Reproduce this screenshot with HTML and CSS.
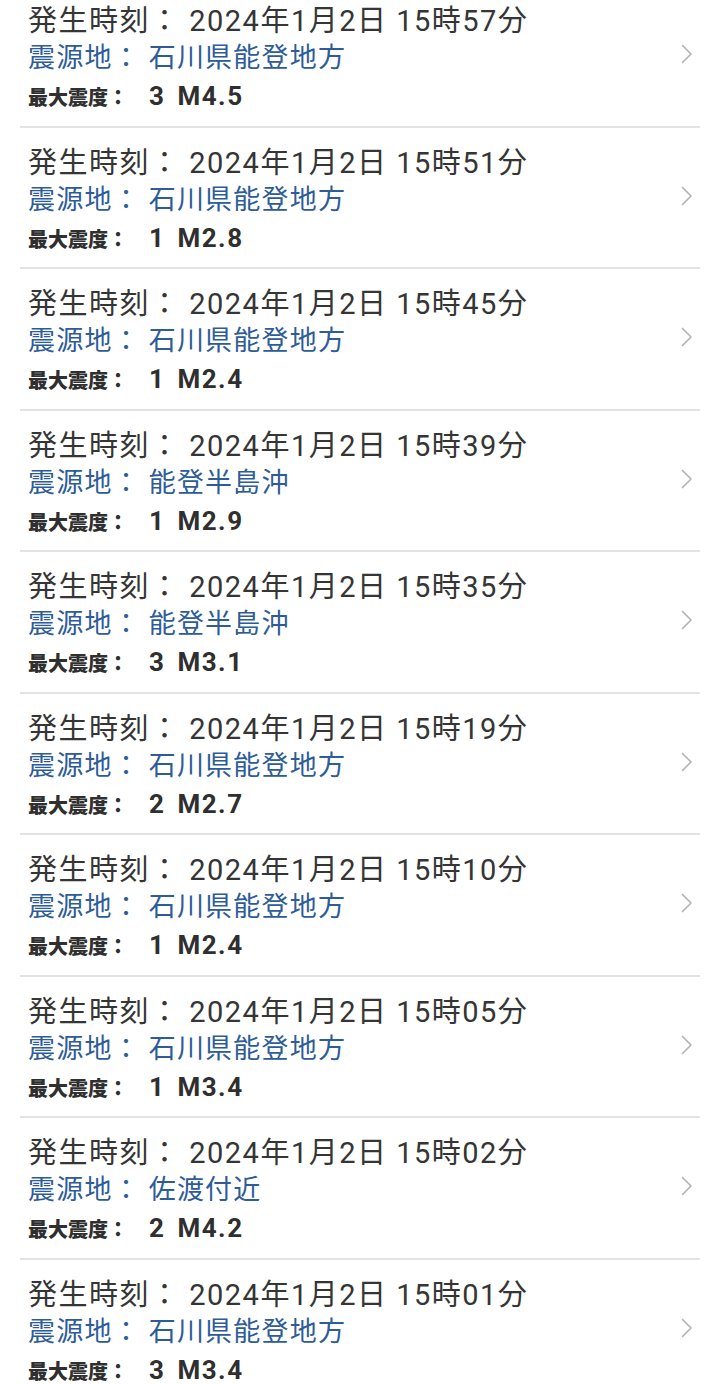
FILE: index.html
```html
<!DOCTYPE html>
<html lang="ja">
<head>
<meta charset="utf-8">
<title>地震情報</title>
<link rel="stylesheet" href="styles.css">
</head>
<body>
<ul class="list">
  <li class="item"><div class="body"><div class="t">発生時刻： 2024年1月2日 15時57分</div><div class="p">震源地： 石川県能登地方</div><div class="m"><span class="lbl">最大震度：</span><span class="v">3</span><span class="v mag">M4.5</span></div></div><svg class="chev" viewBox="0 0 12 20" width="12" height="20"><polyline points="1.5,1.5 10,10 1.5,18.5"/></svg></li>
  <li class="item"><div class="body"><div class="t">発生時刻： 2024年1月2日 15時51分</div><div class="p">震源地： 石川県能登地方</div><div class="m"><span class="lbl">最大震度：</span><span class="v">1</span><span class="v mag">M2.8</span></div></div><svg class="chev" viewBox="0 0 12 20" width="12" height="20"><polyline points="1.5,1.5 10,10 1.5,18.5"/></svg></li>
  <li class="item"><div class="body"><div class="t">発生時刻： 2024年1月2日 15時45分</div><div class="p">震源地： 石川県能登地方</div><div class="m"><span class="lbl">最大震度：</span><span class="v">1</span><span class="v mag">M2.4</span></div></div><svg class="chev" viewBox="0 0 12 20" width="12" height="20"><polyline points="1.5,1.5 10,10 1.5,18.5"/></svg></li>
  <li class="item"><div class="body"><div class="t">発生時刻： 2024年1月2日 15時39分</div><div class="p">震源地： 能登半島沖</div><div class="m"><span class="lbl">最大震度：</span><span class="v">1</span><span class="v mag">M2.9</span></div></div><svg class="chev" viewBox="0 0 12 20" width="12" height="20"><polyline points="1.5,1.5 10,10 1.5,18.5"/></svg></li>
  <li class="item"><div class="body"><div class="t">発生時刻： 2024年1月2日 15時35分</div><div class="p">震源地： 能登半島沖</div><div class="m"><span class="lbl">最大震度：</span><span class="v">3</span><span class="v mag">M3.1</span></div></div><svg class="chev" viewBox="0 0 12 20" width="12" height="20"><polyline points="1.5,1.5 10,10 1.5,18.5"/></svg></li>
  <li class="item"><div class="body"><div class="t">発生時刻： 2024年1月2日 15時19分</div><div class="p">震源地： 石川県能登地方</div><div class="m"><span class="lbl">最大震度：</span><span class="v">2</span><span class="v mag">M2.7</span></div></div><svg class="chev" viewBox="0 0 12 20" width="12" height="20"><polyline points="1.5,1.5 10,10 1.5,18.5"/></svg></li>
  <li class="item"><div class="body"><div class="t">発生時刻： 2024年1月2日 15時10分</div><div class="p">震源地： 石川県能登地方</div><div class="m"><span class="lbl">最大震度：</span><span class="v">1</span><span class="v mag">M2.4</span></div></div><svg class="chev" viewBox="0 0 12 20" width="12" height="20"><polyline points="1.5,1.5 10,10 1.5,18.5"/></svg></li>
  <li class="item"><div class="body"><div class="t">発生時刻： 2024年1月2日 15時05分</div><div class="p">震源地： 石川県能登地方</div><div class="m"><span class="lbl">最大震度：</span><span class="v">1</span><span class="v mag">M3.4</span></div></div><svg class="chev" viewBox="0 0 12 20" width="12" height="20"><polyline points="1.5,1.5 10,10 1.5,18.5"/></svg></li>
  <li class="item"><div class="body"><div class="t">発生時刻： 2024年1月2日 15時02分</div><div class="p">震源地： 佐渡付近</div><div class="m"><span class="lbl">最大震度：</span><span class="v">2</span><span class="v mag">M4.2</span></div></div><svg class="chev" viewBox="0 0 12 20" width="12" height="20"><polyline points="1.5,1.5 10,10 1.5,18.5"/></svg></li>
  <li class="item"><div class="body"><div class="t">発生時刻： 2024年1月2日 15時01分</div><div class="p">震源地： 石川県能登地方</div><div class="m"><span class="lbl">最大震度：</span><span class="v">3</span><span class="v mag">M3.4</span></div></div><svg class="chev" viewBox="0 0 12 20" width="12" height="20"><polyline points="1.5,1.5 10,10 1.5,18.5"/></svg></li>
</ul>
</body>
</html>
```
FILE: styles.css
```css
html, body {
  margin: 0;
  padding: 0;
  background: #ffffff;
  overflow: hidden;
}
body {
  font-family: Roboto, "Noto Sans CJK JP", sans-serif;
  color: #333333;
}
.list {
  list-style: none;
  margin: -14px 0 0 0;
  padding: 0;
}
.item {
  display: flex;
  margin: 0 20px;
  height: 141.5px;
  box-sizing: border-box;
  border-bottom: 2px solid #e3e3e3;
}
.body {
  flex: 1;
  padding: 17px 0 0 8px;
  white-space: nowrap;
}
.t {
  font-size: 29px;
  line-height: 36px;
  letter-spacing: 1.5px;
  color: #353535;
}
.p {
  font-size: 27px;
  line-height: 38px;
  letter-spacing: 1.2px;
  word-spacing: 0;
  color: #2d5c98;
}
.m {
  font-size: 20px;
  line-height: 42px;
  font-weight: 700;
  letter-spacing: 0;
  color: #2f2f2f;
}
.lbl {
  font-weight: 900;
}
.v {
  font-size: 26px;
  line-height: 1;
  letter-spacing: 1.5px;
  margin-left: 21px;
}
.v.mag {
  margin-left: 12px;
}
.chev {
  flex: none;
  margin: 58px 7px 0 0;
  fill: none;
  stroke: #b4b4b4;
  stroke-width: 1.7;
  stroke-linecap: round;
  stroke-linejoin: round;
}
```
